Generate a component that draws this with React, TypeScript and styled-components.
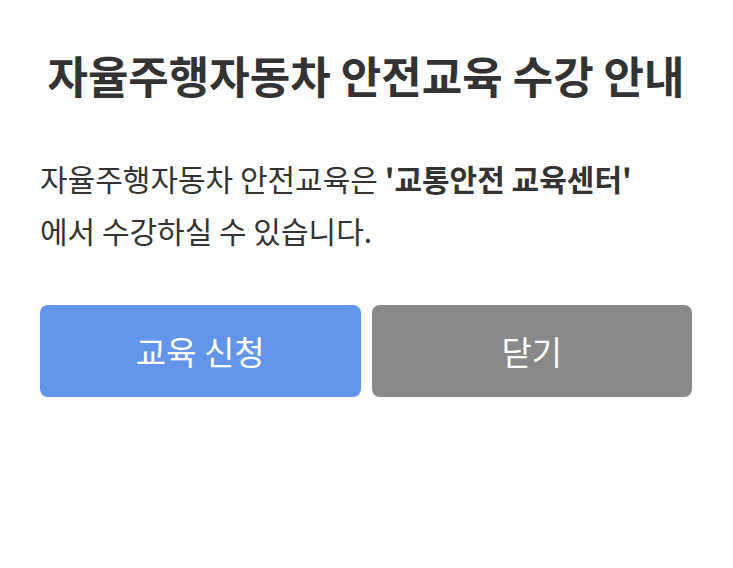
import React from "react";
import styled, { createGlobalStyle } from "styled-components";

const GlobalStyle = createGlobalStyle`
  html, body {
    margin: 0;
    padding: 0;
    background: #fff;
  }
  body {
    font-family: "Noto Sans CJK KR", "Noto Sans", sans-serif;
    color: #333;
  }
`;

const Modal = styled.div`
  width: 733px;
  box-sizing: border-box;
  padding: 40px 41px 40px 40px;
`;

const Title = styled.h1`
  margin: 0;
  font-size: 44px;
  font-weight: 700;
  line-height: 70px;
  text-align: center;
  color: #333;
`;

const Message = styled.p`
  margin: 42px 0 0;
  font-size: 30px;
  line-height: 52px;
  color: #333;

  strong {
    font-weight: 700;
  }
`;

const Actions = styled.div`
  display: flex;
  gap: 11px;
  margin-top: 49px;
`;

const Button = styled.button<{ $tone: "primary" | "secondary" }>`
  flex: 1;
  height: 92px;
  border: none;
  border-radius: 8px;
  background: ${(p) => (p.$tone === "primary" ? "#6495ed" : "#898989")};
  color: #fff;
  font-family: "Noto Sans CJK KR", "Noto Sans", sans-serif;
  font-size: 33px;
  cursor: pointer;
`;

export default function App() {
  return (
    <>
      <GlobalStyle />
      <Modal>
        <Title>자율주행자동차 안전교육 수강 안내</Title>
        <Message>
          자율주행자동차 안전교육은 <strong>'교통안전 교육센터'</strong>
          <br />
          에서 수강하실 수 있습니다.
        </Message>
        <Actions>
          <Button $tone="primary">교육 신청</Button>
          <Button $tone="secondary">닫기</Button>
        </Actions>
      </Modal>
    </>
  );
}
